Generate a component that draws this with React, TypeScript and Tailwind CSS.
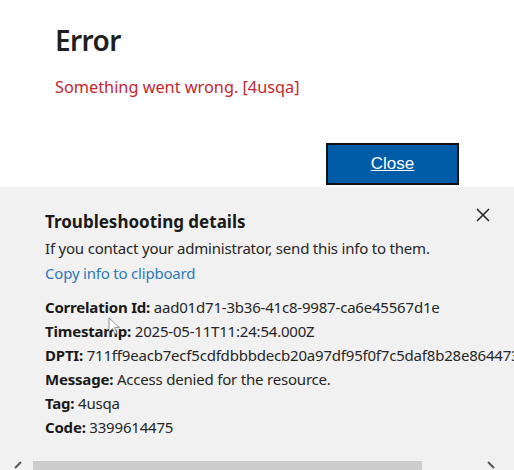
import React from "react";

export default function App() {
  const rows: [string, string][] = [
    ["Correlation Id:", "aad01d71-3b36-41c8-9987-ca6e45567d1e"],
    ["Timestamp:", "2025-05-11T11:24:54.000Z"],
    ["DPTI:", "711ff9eacb7ecf5cdfdbbbdecb20a97df95f0f7c5daf8b28e8644735"],
    ["Message:", "Access denied for the resource."],
    ["Tag:", "4usqa"],
    ["Code:", "3399614475"],
  ];
  return (
    <div
      className="w-[514px] h-[470px] overflow-hidden bg-white flex flex-col relative"
      style={{ fontFamily: '"Noto Sans", "Open Sans", sans-serif' }}
    >
      <div className="h-[187px] shrink-0 flex flex-col">
        <div className="pl-[55px] pt-[20px] text-[28px] leading-[40px] font-semibold tracking-[-0.6px] text-[#1f1f1f]">
          Error
        </div>
        <div className="pl-[55px] mt-[15px] text-[16.3px] leading-[24px] text-[#c4262e]">
          Something went wrong. [4usqa]
        </div>
        <div className="flex justify-end pr-[55px] mt-[44px]">
          <button
            className="w-[133px] h-[42px] bg-[#005ca6] border-2 border-[#111] text-white text-[17px] underline"
            style={{ fontFamily: '"Liberation Sans", Arial, sans-serif' }}
          >
            Close
          </button>
        </div>
      </div>
      <div className="flex-1 bg-[#f1f1f1] relative flex flex-col">
        <div className="flex justify-between items-start pl-[45px] pr-[24px] pt-[24px]">
          <div className="text-[17px] leading-[22px] font-bold text-[#1a1a1a]">
            Troubleshooting details
          </div>
          <svg width="14" height="14" viewBox="0 0 14 14" className="mt-[-3px]">
            <path d="M1 1L13 13M13 1L1 13" stroke="#222" strokeWidth="1.5" />
          </svg>
        </div>
        <div className="pl-[45px] mt-[3px] text-[15px] tracking-[-0.2px] leading-[24px] text-[#262626]">
          If you contact your administrator, send this info to them.
        </div>
        <div className="pl-[45px] mt-[1px] text-[15px] tracking-[-0.2px] leading-[24px] text-[#2e78b8]">
          Copy info to clipboard
        </div>
        <div className="pl-[45px] mt-[10px] flex flex-col">
          {rows.map(([k, v]) => (
            <div
              key={k}
              className="text-[15px] tracking-[-0.2px] leading-[24px] text-[#262626] whitespace-nowrap"
            >
              <span className="font-bold text-[#1a1a1a]">{k}</span> {v}
            </div>
          ))}
        </div>
        <div className="mt-auto h-[9px] flex items-start">
          <svg width="33" height="9" viewBox="0 0 33 9">
            <path d="M21 1L15 7" stroke="#555" strokeWidth="2" />
          </svg>
          <div className="w-[389px] h-[9px] bg-[#cdcdcd]" />
          <div className="flex-1 flex justify-end pr-[18px]">
            <svg width="10" height="9" viewBox="0 0 10 9">
              <path d="M2 1L8 7" stroke="#555" strokeWidth="2" />
            </svg>
          </div>
        </div>
      </div>
      <svg
        width="14"
        height="20"
        viewBox="0 0 14 20"
        className="absolute left-[108px] top-[317px]"
      >
        <path
          d="M1 1L1 15L4.5 11.5L7 17L9 16L6.6 10.6L11.5 10.6Z"
          fill="#fff"
          stroke="#777"
          strokeWidth="0.8"
          strokeLinejoin="round"
        />
      </svg>
    </div>
  );
}
